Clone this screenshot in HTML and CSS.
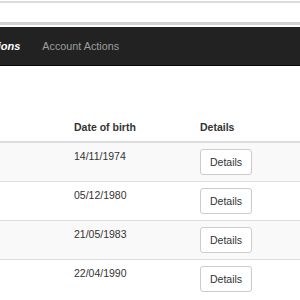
FILE: index.html
```html
<!DOCTYPE html>
<html lang="en">
<head>
    <meta charset="UTF-8">
    <meta name="viewport" content="width=device-width, initial-scale=1.0">
    <title>Customers</title>
    <link rel="stylesheet" href="styles.css">
</head>
<body>
    <div class="address-bar"></div>

    <nav class="navbar">
        <span class="navbar-brand">Customer Actions</span>
        <a href="#" class="nav-link">Account Actions</a>
    </nav>

    <table class="customer-table">
        <thead>
            <tr>
                <th class="col-name"></th>
                <th class="col-date">Date of birth</th>
                <th>Details</th>
            </tr>
        </thead>
        <tbody>
            <tr>
                <td></td>
                <td>14/11/1974</td>
                <td><button class="details-button">Details</button></td>
            </tr>
            <tr>
                <td></td>
                <td>05/12/1980</td>
                <td><button class="details-button">Details</button></td>
            </tr>
            <tr>
                <td></td>
                <td>21/05/1983</td>
                <td><button class="details-button">Details</button></td>
            </tr>
            <tr>
                <td></td>
                <td>22/04/1990</td>
                <td><button class="details-button">Details</button></td>
            </tr>
        </tbody>
    </table>
</body>
</html>
```

FILE: styles.css
```css
* {
    margin: 0;
    padding: 0;
    box-sizing: border-box;
    font-family: 'Liberation Sans', Arial, sans-serif;
}

body {
    background: #fff;
    color: #333;
    font-size: 10.5px;
    line-height: 15px;
    overflow: hidden;
}

.address-bar {
    margin-top: 1px;
    height: 24px;
    background: #fff;
    border-top: 2px solid #dcdcdc;
    border-bottom: 3px solid #d2d2d2;
    margin-bottom: 2px;
}

.navbar {
    height: 39px;
    background: #222;
    border-bottom: 1px solid #080808;
    display: flex;
    align-items: center;
    margin-left: -74px;
}

.navbar-brand {
    color: #fff;
    font-weight: 700;
    font-style: italic;
    font-size: 11px;
    padding-right: 11px;
}

.nav-link {
    color: #9d9d9d;
    text-decoration: none;
    font-size: 10.8px;
    padding: 0 11px;
}

.customer-table {
    margin-top: 48px;
    width: 100%;
    border-collapse: collapse;
}

.customer-table th,
.customer-table td {
    padding: 6px;
    text-align: left;
    vertical-align: top;
}

.customer-table th {
    font-weight: 700;
    border-bottom: 2px solid #ddd;
}

.customer-table td {
    border-top: 1px solid #ddd;
}

.customer-table tbody tr:nth-child(odd) {
    background: #f9f9f9;
}

.col-name {
    width: 68px;
}

.col-date {
    width: 126px;
}

.details-button {
    display: block;
    height: 26px;
    padding: 0 9px;
    background: #fff;
    color: #333;
    border: 1px solid #ccc;
    border-radius: 3px;
    font-size: 10.5px;
    line-height: 24px;
    cursor: pointer;
}
```
